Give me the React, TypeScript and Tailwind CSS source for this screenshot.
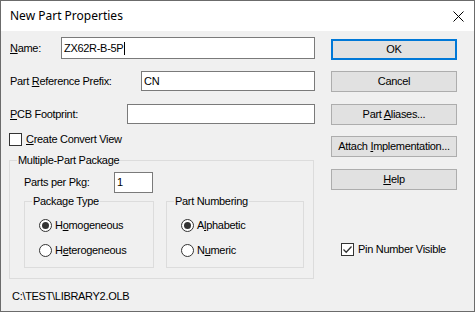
import React from 'react';

const font = { fontFamily: '"Liberation Sans", Arial, sans-serif' };

const Key: React.FC<{ children: React.ReactNode }> = ({ children }) => (
  <span className="underline underline-offset-[1px]">{children}</span>
);

const TextBox: React.FC<{ value?: string; w: string; h: string; caret?: boolean }> = ({ value, w, h, caret }) => (
  <div className={`${w} ${h} ml-auto flex items-center border border-[#7a7a7a] bg-white pl-[2px] text-black`}>
    <span>{value}</span>
    {caret && <span className="ml-[1px] h-[13px] w-[1px] bg-black" />}
  </div>
);

const Radio: React.FC<{ checked?: boolean; children: React.ReactNode }> = ({ checked, children }) => (
  <div className="flex h-[13px] items-center gap-[3px]">
    <span className="flex h-[13px] w-[13px] items-center justify-center rounded-full border border-[#333333] bg-white">
      {checked && <span className="h-[7px] w-[7px] rounded-full bg-[#333333]" />}
    </span>
    <span>{children}</span>
  </div>
);

const CheckBox: React.FC<{ checked?: boolean; children: React.ReactNode }> = ({ checked, children }) => (
  <div className="flex h-[13px] items-center gap-[4px]">
    <span className="flex h-[13px] w-[13px] items-center justify-center border border-[#333333] bg-white">
      {checked && (
        <svg width="11" height="11" viewBox="0 0 11 11">
          <path d="M1.5 5.5 L4.2 8.2 L9.5 2.5" fill="none" stroke="#333" strokeWidth="1.3" />
        </svg>
      )}
    </span>
    <span>{children}</span>
  </div>
);

const Button: React.FC<{ children: React.ReactNode; primary?: boolean; className?: string }> = ({ children, primary, className = '' }) => (
  <div
    className={`flex h-[21px] w-[126px] items-center justify-center bg-[#e1e1e1] text-black ${
      primary ? 'border-2 border-[#0078d7]' : 'border border-[#adadad]'
    } ${className}`}
  >
    <span>{children}</span>
  </div>
);

const GroupBox: React.FC<{ title: string; className?: string; children: React.ReactNode }> = ({ title, className = '', children }) => (
  <div className={`relative border border-[#dcdcdc] ${className}`}>
    <span className="absolute -top-[8px] left-[7px] bg-[#f0f0f0] px-[1px] leading-[14px]">{title}</span>
    {children}
  </div>
);

export default function App() {
  return (
    <div
      className="flex h-[312px] w-[475px] flex-col border border-[#6b6b6b] bg-[#f0f0f0] text-[11px] tracking-[-0.3px] text-black"
      style={font}
    >
      <div className="flex h-[30px] shrink-0 items-center justify-between bg-white pl-[9px] pr-[9px] tracking-normal">
        <span className="text-[12px] text-black" style={{ fontFamily: '"Noto Sans", "Open Sans", sans-serif' }}>
          New Part Properties
        </span>
        <svg width="11" height="11" viewBox="0 0 11 11" className="mr-[1px]">
          <path d="M0.5 0.5 L10.5 10.5 M10.5 0.5 L0.5 10.5" stroke="#000" strokeWidth="1" />
        </svg>
      </div>

      <div className="flex flex-1">
        <div className="flex w-[314px] flex-col pl-[8px]">
          <div className="mt-[6px] flex h-[22px] items-center">
            <span className="pl-[1px]">
              <Key>N</Key>ame:
            </span>
            <TextBox value="ZX62R-B-5P" w="w-[254px]" h="h-[22px]" caret />
          </div>
          <div className="mt-[12px] flex h-[20px] items-center">
            <span className="pl-[1px]">
              Part <Key>R</Key>eference Prefix:
            </span>
            <TextBox value="CN" w="w-[174px]" h="h-[20px]" />
          </div>
          <div className="mt-[13px] flex h-[20px] items-center">
            <span className="pl-[1px]">
              <Key>P</Key>CB Footprint:
            </span>
            <TextBox w="w-[188px]" h="h-[20px]" />
          </div>
          <div className="mt-[9px]">
            <CheckBox>
              <Key>C</Key>reate Convert View
            </CheckBox>
          </div>

          <GroupBox title="Multiple-Part Package" className="mt-[14px] h-[119px] w-[305px]">
            <div className="mt-[11px] flex h-[21px] items-center pl-[14px]">
              <span className="w-[90px]">Parts per Pkg:</span>
              <div className="flex h-[21px] w-[39px] items-center border border-[#7a7a7a] bg-white pl-[2px]">1</div>
            </div>
            <div className="mt-[8px] flex gap-[12px] pl-[14px]">
              <GroupBox title="Package Type" className="h-[67px] w-[130px]">
                <div className="flex flex-col gap-[12px] pl-[14px] pt-[17px]">
                  <Radio checked>
                    H<Key>o</Key>mogeneous
                  </Radio>
                  <Radio>
                    H<Key>e</Key>terogeneous
                  </Radio>
                </div>
              </GroupBox>
              <GroupBox title="Part Numbering" className="h-[67px] w-[138px]">
                <div className="flex flex-col gap-[12px] pl-[14px] pt-[17px]">
                  <Radio checked>
                    A<Key>l</Key>phabetic
                  </Radio>
                  <Radio>
                    N<Key>u</Key>meric
                  </Radio>
                </div>
              </GroupBox>
            </div>
          </GroupBox>

          <div className="mt-[10px] pl-[3px] leading-[14px]">C:\TEST\LIBRARY2.OLB</div>
        </div>

        <div className="flex flex-col pl-[16px]">
          <Button primary className="mt-[8px]">OK</Button>
          <Button className="mt-[11px]">Cancel</Button>
          <Button className="mt-[12px]">
            Part <Key>A</Key>liases...
          </Button>
          <Button className="mt-[11px]">
            Attach <Key>I</Key>mplementation...
          </Button>
          <Button className="mt-[12px]">
            <Key>H</Key>elp
          </Button>
          <div className="mt-[53px] pl-[10px]">
            <CheckBox checked>Pin Number Visible</CheckBox>
          </div>
        </div>
      </div>
    </div>
  );
}
